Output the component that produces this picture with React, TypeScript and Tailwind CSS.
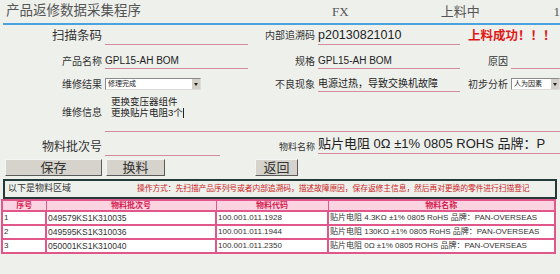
import React from "react";

const cjk = { fontFamily: '"Liberation Sans", "Noto Sans CJK SC", sans-serif' };

function Field({ w, children, big = false }: { w: string; children?: React.ReactNode; big?: boolean }) {
  return (
    <div
      className={`${w} h-full flex items-end border-b border-[#d7899e] pb-[1px] text-[#222] whitespace-nowrap overflow-hidden ${
        big ? "text-[12.5px] leading-[16px]" : "text-[10px] leading-[12px]"
      }`}
    >
      {children}
    </div>
  );
}

function Label({ w, children, className = "" }: { w: string; children: React.ReactNode; className?: string }) {
  return (
    <div className={`${w} h-full flex items-end justify-end pb-[1px] pr-[3px] text-[#333] whitespace-nowrap ${className}`}>
      {children}
    </div>
  );
}

function Select({ w, value }: { w: string; value: string }) {
  return (
    <div className={`${w} h-[12px] mb-[2px] flex bg-white border border-[#8a8a8a] border-r-[#dcdcdc] border-b-[#dcdcdc]`}>
      <div className="flex-1 text-[7px] leading-[10px] pl-[2px] text-[#222] overflow-hidden whitespace-nowrap">{value}</div>
      <div className="w-[9px] h-full bg-[#d4d0c8] border-l border-[#fff] flex items-center justify-center">
        <div className="w-0 h-0 border-l-[2px] border-r-[2px] border-t-[3px] border-l-transparent border-r-transparent border-t-[#222]" />
      </div>
    </div>
  );
}

function Btn({ w, children }: { w: string; children: React.ReactNode }) {
  return (
    <div
      className={`${w} h-[17px] flex items-center justify-center bg-[#d6d3cc] border border-t-[#f4f4f4] border-l-[#f4f4f4] border-r-[#5a5a5a] border-b-[#5a5a5a] text-[13px] leading-[15px] text-[#333]`}
    >
      {children}
    </div>
  );
}

const rows = [
  { no: "1", batch: "049579KS1K310035", code: "100.001.011.1928", name: "贴片电阻 4.3KΩ ±1% 0805 RoHS 品牌：PAN-OVERSEAS" },
  { no: "2", batch: "049595KS1K310036", code: "100.001.011.1944", name: "贴片电阻 130KΩ ±1% 0805 RoHS 品牌：PAN-OVERSEAS" },
  { no: "3", batch: "050001KS1K310040", code: "100.001.011.2350", name: "贴片电阻 0Ω ±1% 0805 ROHS 品牌：PAN-OVERSEAS" },
];

export default function App() {
  return (
    <div className="w-[560px] h-[274px] bg-[#eef0ec] overflow-hidden" style={cjk}>
      {/* 标题栏 */}
      <div className="h-[25px] ml-[3px] flex items-center border-b-2 border-[#4aa3df] text-[#555]">
        <div className="w-[330px] pl-[3px] text-[13.5px]">产品返修数据采集程序</div>
        <div className="w-[109px] text-[13px]" style={{ fontFamily: '"Liberation Serif", serif' }}>FX</div>
        <div className="w-[113px] text-[13px]">上料中</div>
        <div className="text-[13px]" style={{ fontFamily: '"Liberation Serif", serif' }}>1</div>
      </div>

      {/* 扫描条码 */}
      <div className="h-[20px] flex">
        <Label w="w-[105px]" className="text-[12.5px] leading-[16px] pr-[3px]">扫描条码</Label>
        <Field w="w-[143px]" big />
        <Label w="w-[70px]" className="text-[10px] leading-[12px] pb-[3px]">内部追溯码</Label>
        <Field w="w-[142px]" big>p20130821010</Field>
        <div className="h-full flex items-end pb-[1px] pl-[8px] text-[12.5px] leading-[16px] font-bold text-[#e01818] whitespace-nowrap">
          上料成功！！！
        </div>
      </div>

      {/* 产品名称 */}
      <div className="h-[24px] flex text-[10px] leading-[12px]">
        <Label w="w-[105px]">产品名称</Label>
        <Field w="w-[143px]">GPL15-AH BOM</Field>
        <Label w="w-[70px]">规格</Label>
        <Field w="w-[142px]">GPL15-AH BOM</Field>
        <Label w="w-[51px]">原因</Label>
        <Field w="w-[49px]" />
      </div>

      {/* 维修结果 */}
      <div className="h-[23px] flex items-end text-[10px] leading-[12px]">
        <Label w="w-[105px]">维修结果</Label>
        <Select w="w-[96px]" value="修理完成" />
        <Label w="w-[117px]">不良现象</Label>
        <Field w="w-[142px]">电源过热，导致交换机故障</Field>
        <Label w="w-[51px]">初步分析</Label>
        <Select w="w-[49px]" value="人为因素" />
      </div>

      {/* 维修信息 */}
      <div className="h-[40px] flex text-[9.5px] leading-[11px]">
        <div className="w-[105px] pt-[15px] pr-[3px] text-right text-[#333] text-[10px]">维修信息</div>
        <div className="flex-1 border-b border-[#d7899e] pl-[6px] pt-[4px] text-[#222]">
          <div className="h-[11px]">更换变压器组件</div>
          <div className="h-[11px] flex items-center">
            更换贴片电阻3个<span className="inline-block w-px h-[10px] bg-[#222]" />
          </div>
        </div>
      </div>

      {/* 物料批次号 */}
      <div className="h-[24px] flex">
        <Label w="w-[105px]" className="text-[12px] leading-[16px] pb-[1px]">物料批次号</Label>
        <Field w="w-[115px]" big />
        <Label w="w-[98px]" className="h-[22px] text-[9px] leading-[14px] pb-[2px]">物料名称</Label>
        <div className="flex-1 h-[22px] flex border-b border-[#d7899e] items-end pb-[1px] whitespace-nowrap overflow-hidden">
          <span className="text-[13px] leading-[17px] text-[#222]">贴片电阻 0Ω ±1% 0805 ROHS 品牌：P</span>
        </div>
      </div>

      {/* 按钮 */}
      <div className="h-[17px] mt-[3px] flex">
        <div className="ml-[5px]"><Btn w="w-[97px]">保存</Btn></div>
        <div className="ml-[4px]"><Btn w="w-[59px]">换料</Btn></div>
        <div className="ml-[90px]"><Btn w="w-[43px]">返回</Btn></div>
      </div>

      {/* 物料区域 */}
      <div className="mt-[3px] ml-[3px] w-[554px] h-[20px] border-2 border-[#223a3a] flex items-center whitespace-nowrap">
        <div className="w-[132px] pl-[3px] text-[9px] text-[#333]">以下是物料区域</div>
        <div className="text-[7.8px] text-[#cc2222] tracking-[-0.1px]">
          操作方式：先扫描产品序列号或者内部追溯码，描述故障原因，保存返修主信息，然后再对更换的零件进行扫描登记
        </div>
      </div>

      <table className="ml-[1px] w-[555px] border-collapse border-2 border-[#e2578a] text-[8px]">
        <thead>
          <tr className="bg-[#fcd3e0] h-[10px] text-[#d42050] font-bold">
            <th className="w-[44px] border border-[#e2578a] leading-[9px] p-0">序号</th>
            <th className="w-[170px] border border-[#e2578a] leading-[9px] p-0">物料批次号</th>
            <th className="w-[112px] border border-[#e2578a] leading-[9px] p-0">物料代码</th>
            <th className="border border-[#e2578a] leading-[9px] p-0">物料名称</th>
          </tr>
        </thead>
        <tbody>
          {rows.map((r) => (
            <tr key={r.no} className="bg-white h-[14px] text-[#333]">
              <td className="border-2 border-[#e2578a] px-[1px] py-0 leading-[10px]">{r.no}</td>
              <td className="border-2 border-[#e2578a] px-[1px] py-0 leading-[10px] text-[8.5px]">{r.batch}</td>
              <td className="border-2 border-[#e2578a] px-[1px] py-0 leading-[10px]">{r.code}</td>
              <td className="border-2 border-[#e2578a] px-[1px] py-0 leading-[10px] whitespace-nowrap">{r.name}</td>
            </tr>
          ))}
        </tbody>
      </table>
    </div>
  );
}
